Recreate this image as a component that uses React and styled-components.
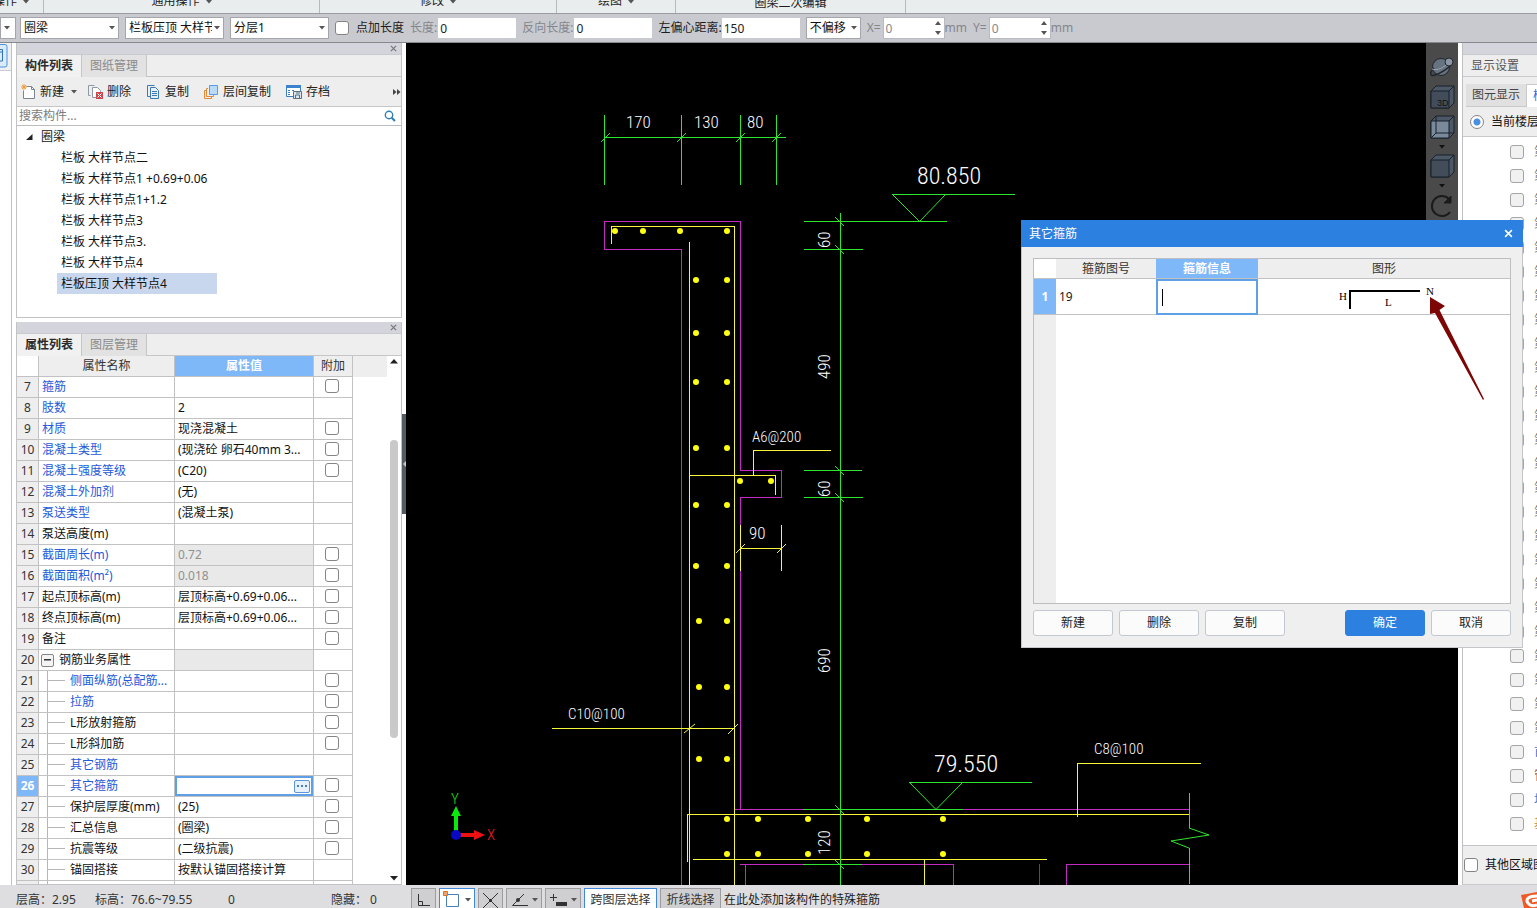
import React from "react";
import styled, { createGlobalStyle, css } from "styled-components";

const Global = createGlobalStyle`
  *, *::before, *::after { box-sizing: border-box; }
  body { margin: 0; background: #fff; }
  body, button, input, select, table {
    font-family: "Noto Sans", "Noto Sans CJK SC", sans-serif;
    font-size: 12px;
    line-height: 16px;
    color: #1c1c1c;
  }
`;

const Page = styled.div`
  display: flex;
  flex-direction: column;
  height: 100vh;
  overflow: hidden;
  white-space: nowrap;
`;

/* ---------- ribbon and option bar ---------- */

const Ribbon = styled.header`
  display: flex;
  flex: none;
  height: 14px;
  overflow: hidden;
  background: #e9edee;
  border-bottom: 1px solid #9b9ea1;
`;

const RibbonGroup = styled.div`
  display: flex;
  flex: none;
  align-items: flex-end;
  justify-content: ${(p) => (p.$end ? "flex-end" : "center")};
  gap: 6px;
  width: ${(p) => p.$width}px;
  padding: 0 ${(p) => (p.$end ? 14 : 0)}px ${(p) => (p.$low ? 2 : 4)}px 0;
  border-right: 1px solid #b5babd;
`;

const RibbonCaret = styled.span`
  display: flex;
  padding-bottom: 5px;
`;

const OptionBar = styled.div`
  display: flex;
  flex: none;
  align-items: center;
  gap: 6px;
  height: 29px;
  background: #c9cad0;
  border-bottom: 1px solid #86888d;
`;

const SelectBox = styled.span`
  position: relative;
  display: flex;
  flex: none;
  width: ${(p) => p.$width}px;
  svg { position: absolute; right: 4px; top: 9px; pointer-events: none; }
`;

const Select = styled.select`
  appearance: none;
  width: 100%;
  height: 22px;
  padding: 0 11px 0 3px;
  border: 1px solid #a5a6ab;
  border-radius: 0;
  background: #fff;
  color: #111;
`;

const Field = styled.label`
  display: flex;
  flex: none;
  align-items: center;
  gap: ${(p) => p.$gap || 0}px;
  color: ${(p) => (p.$dim ? "#84868b" : "#1c1c1c")};
`;

const Input = styled.input`
  width: ${(p) => p.$width}px;
  height: 20px;
  padding: 0 2px;
  border: 0;
  background: #fff;
  color: ${(p) => (p.$dim ? "#85878b" : "#222")};
  outline: none;
`;

const Spinner = styled.span`
  display: flex;
  align-items: center;
  justify-content: space-between;
  width: 62px;
  padding-right: 3px;
  background: #fff;
  border: 1px solid #b9bac0;
`;

const Check = styled.input`
  appearance: none;
  flex: none;
  width: 14px;
  height: 14px;
  margin: 0;
  border: 1px solid ${(p) => (p.$soft ? "#a4a4a4" : "#858585")};
  border-radius: 3px;
  background: ${(p) => (p.$soft ? "#f1f1f1" : "#fff")};
`;

/* ---------- docked panels ---------- */

const Work = styled.main`
  position: relative;
  display: flex;
  flex: 1;
  min-height: 0;
`;

const Rail = styled.aside`
  flex: none;
  width: 12px;
  overflow: hidden;
  border-right: 1px solid #bfc1c9;
  background: #fff;
`;

const RailTop = styled.div`
  height: 28px;
  background: #eff0f4;
  border-bottom: 1px solid #c9ccd6;
`;

const Dock = styled.aside`
  display: flex;
  flex: none;
  flex-direction: column;
  gap: 4px;
  width: 390px;
  padding-left: 4px;
`;

const Panel = styled.section`
  display: flex;
  flex-direction: column;
  flex: ${(p) => (p.$grow ? "1" : "0 0 275px")};
  min-height: 0;
  border: 1px solid #c3c3c6;
  border-top: 0;
`;

const PanelTitle = styled.div`
  display: flex;
  flex: none;
  align-items: center;
  justify-content: flex-end;
  height: 12px;
  padding-right: 4px;
  background: #d3d4dc;
  border-bottom: 1px solid #c9cad0;
`;

const IconButton = styled.button`
  display: flex;
  align-items: center;
  justify-content: center;
  padding: 0;
  border: 0;
  background: none;
`;

const Tabs = styled.div`
  display: flex;
  flex: none;
  height: 22px;
  background: #eee;
  border-bottom: 1px solid #c6c6c8;
`;

const Tab = styled.button`
  padding: 0 8px;
  height: 22px;
  border: 0;
  border-right: 1px solid #c6c6c8;
  background: ${(p) => (p.$active ? "#f1f1f1" : "#e2e2e2")};
  color: ${(p) => (p.$active ? "#2b2b2b" : "#8a8a8a")};
  font-weight: ${(p) => (p.$active ? 600 : 400)};
`;

const Tools = styled.div`
  display: flex;
  flex: none;
  align-items: center;
  gap: 15px;
  height: 30px;
  padding: 0 0 0 4px;
  background: #eee;
  border-bottom: 1px solid #c6c6c8;
`;

const Tool = styled.button`
  display: flex;
  align-items: center;
  gap: 3px;
  padding: 0;
  border: 0;
  background: none;
  color: #222;
`;

const CaretGap = styled.span`
  display: flex;
  margin-right: -4px;
  padding-left: 4px;
`;

const More = styled(IconButton)`
  margin-left: auto;
`;

const Search = styled.label`
  display: flex;
  flex: none;
  align-items: center;
  height: 19px;
  padding-right: 5px;
  border-bottom: 1px solid #bcbcbe;
  input {
    flex: 1;
    min-width: 0;
    padding: 0 2px;
    border: 0;
    outline: none;
  }
  input::placeholder { color: #7c7c7c; opacity: 1; }
`;

const Tree = styled.ul`
  margin: 0;
  padding: 0;
  list-style: none;
`;

const TreeRoot = styled.div`
  display: flex;
  align-items: center;
  gap: 8px;
  height: 21px;
  padding-left: 9px;
  color: #111;
`;

const TreeItem = styled.li`
  width: 160px;
  height: 21px;
  margin-left: 40px;
  padding-left: 4px;
  line-height: 21px;
  color: #111;
  background: ${(p) => (p.$selected ? "#c8d7ee" : "transparent")};
`;

/* ---------- property grid ---------- */

const GridArea = styled.div`
  display: flex;
  flex: 1;
  min-height: 0;
  overflow: hidden;
`;

const GridScroll = styled.div`
  flex: 1;
  overflow: hidden;
  background: linear-gradient(#eee 21px, #fff 21px);
`;

const Grid = styled.table`
  width: 336px;
  table-layout: fixed;
  border-collapse: separate;
  border-spacing: 0;
`;

const cell = css`
  height: 21px;
  padding: 0 3px;
  border-right: 1px solid #c2c2c2;
  border-bottom: 1px solid #c2c2c2;
  font-weight: 400;
  overflow: hidden;
`;

const Head = styled.th`
  ${cell}
  background: ${(p) => (p.$on ? "#7fb8f8" : p.$blank ? "#fff" : "#eee")};
  color: ${(p) => (p.$on ? "#fff" : "#333")};
  font-weight: ${(p) => (p.$on ? 600 : 400)};
`;

const Num = styled.th`
  ${cell}
  padding: 0;
  background: ${(p) => (p.$on ? "#7fb8f8" : "#eee")};
  color: ${(p) => (p.$on ? "#fff" : "#333")};
  font-weight: ${(p) => (p.$on ? 700 : 400)};
`;

const Name = styled.td`
  ${cell}
  color: ${(p) => (p.$link ? "#2559d8" : "#111")};
`;

const NameInner = styled.span`
  display: flex;
  align-items: center;
  gap: 5px;
  height: 20px;
`;

const Branch = styled.span`
  flex: none;
  align-self: stretch;
  width: 18px;
  margin-left: 5px;
  border-left: 1px solid #b6b6b6;
  background: linear-gradient(#b6b6b6, #b6b6b6) 0 9px / 18px 1px no-repeat;
`;

const Value = styled.td`
  ${cell}
  background: ${(p) => (p.$locked ? "#e9e9e9" : "#fff")};
  color: ${(p) => (p.$locked ? "#909090" : "#111")};
  ${(p) => p.$on && "box-shadow: inset 0 0 0 2px #5f9fe6;"}
`;

const ValueInner = styled.span`
  display: flex;
  align-items: center;
  justify-content: ${(p) => (p.$end ? "flex-end" : "flex-start")};
`;

const Flag = styled.td`
  ${cell}
  padding: 0 11px 2px;
  input { display: block; }
`;

const Ellipsis = styled(IconButton)`
  width: 16px;
  height: 13px;
  border: 1px solid #5b97d8;
  border-radius: 2px;
  background: #e6f1fc;
`;

const Toggle = styled(IconButton)`
  flex: none;
  width: 13px;
  height: 13px;
  margin-left: -1px;
  border: 1px solid #858585;
  border-radius: 2px;
  background: #f4f4f4;
`;

const ScrollBar = styled.div`
  display: flex;
  flex: none;
  flex-direction: column;
  align-items: center;
  width: 14px;
  padding: 3px 0;
  background: #fff;
`;

const Thumb = styled.div`
  flex: 0 0 298px;
  width: 8px;
  margin: 76px 0 auto;
  border-radius: 4px;
  background: #c9c9c9;
`;

/* ---------- drawing area ---------- */

const Splitter = styled.div`
  display: flex;
  flex: none;
  align-items: center;
  width: 4px;
  button {
    display: flex;
    align-items: center;
    width: 4px;
    height: 100px;
    padding: 0;
    border: 0;
    background: #555b65;
  }
`;

const Canvas = styled.section`
  position: relative;
  flex: 1;
  min-width: 0;
  overflow: hidden;
  background: #000;
  > svg { display: block; }
`;

const ViewTools = styled.nav`
  position: absolute;
  top: 0;
  right: 0;
  display: flex;
  flex-direction: column;
  align-items: center;
  gap: 5px;
  width: 32px;
  height: 190px;
  padding-top: 11px;
  background: #4a4a4b;
`;

const CadText = styled.text`
  font-family: "Roboto Condensed", "Liberation Sans Narrow", "DejaVu Sans Condensed", sans-serif;
  font-weight: 300;
  font-size: ${(p) => p.$size || 17}px;
  fill: ${(p) => p.$fill || "#fff"};
`;

/* ---------- display settings ---------- */

const Side = styled.aside`
  display: flex;
  flex: none;
  flex-direction: column;
  width: 79px;
  padding-left: 4px;
  overflow: hidden;
  background: #fff;
`;

const SideBody = styled.div`
  display: flex;
  flex: 1;
  flex-direction: column;
  min-height: 0;
  overflow: hidden;
  border-left: 1px solid #bfbfc3;
  border-bottom: 1px solid #c9c9cc;
`;

const SideTitle = styled.h2`
  flex: none;
  height: 22px;
  margin: 0;
  padding-left: 8px;
  background: #eee;
  border-bottom: 1px solid #c9c9cc;
  font-size: 12px;
  font-weight: 400;
  line-height: 22px;
  color: #555;
`;

const SideTabs = styled.div`
  display: flex;
  flex: none;
  height: 30px;
  padding: 7px 0 0 3px;
  background: #eee;
`;

const SideTab = styled.button`
  flex: none;
  padding: 0 6px;
  border: 1px solid #c9c9cc;
  border-width: ${(p) => (p.$active ? "1px 1px 0" : "0 0 1px")};
  background: ${(p) => (p.$active ? "#fff" : "#e0e0e0")};
  color: ${(p) => (p.$active ? "#2d6be0" : "#444")};
`;

const RadioRow = styled.label`
  display: flex;
  flex: none;
  align-items: center;
  gap: 7px;
  height: 30px;
  padding-left: 7px;
  background: #eee;
  border-bottom: 1px solid #c9c9cc;
  color: #111;
`;

const Radio = styled.input`
  appearance: none;
  flex: none;
  width: 14px;
  height: 14px;
  margin: 0;
  border: 1px solid #858585;
  border-radius: 50%;
  background: radial-gradient(#4a90e2 3px, #fff 4px);
`;

const Floors = styled.div`
  flex: 1;
  min-height: 0;
  padding-top: 3px;
  overflow: hidden;
`;

const Floor = styled.label`
  display: flex;
  align-items: center;
  gap: 10px;
  height: 24px;
  padding-left: 47px;
  color: ${(p) => p.$color || "#777"};
`;

const SideFoot = styled.label`
  display: flex;
  flex: none;
  align-items: center;
  gap: 7px;
  height: 39px;
  padding-left: 1px;
  background: #eee;
  border-top: 1px solid #c3c3c6;
  color: #111;
`;

/* ---------- stirrup dialog ---------- */

const Dialog = styled.section`
  position: absolute;
  top: 177px;
  right: 14px;
  display: flex;
  flex-direction: column;
  width: 502px;
  height: 428px;
  background: #efeff0;
  border: 1px solid #c4c5c9;
  border-top: 0;
`;

const DialogTitle = styled.header`
  display: flex;
  flex: none;
  align-items: center;
  justify-content: space-between;
  height: 27px;
  margin: 0 -1px;
  padding: 0 10px 0 8px;
  background: #2b80e0;
  color: #fff;
`;

const DialogBody = styled.div`
  display: flex;
  flex: 1;
  flex-direction: column;
  gap: 6px;
  padding: 11px 11px 11px;
`;

const Sheet = styled.div`
  flex: 1;
  border: 1px solid #bdbec1;
  background: linear-gradient(to right, #eee 22px, #fff 22px);
`;

const SheetTable = styled.table`
  width: 100%;
  table-layout: fixed;
  border-collapse: separate;
  border-spacing: 0;
`;

const SheetHead = styled(Head)`
  height: 20px;
  border-right: 0;
`;

const SheetCell = styled.td`
  height: 36px;
  padding: 0 3px;
  border-bottom: 1px solid #c2c2c2;
  background: #fff;
  ${(p) => p.$on && "padding: 0; border: 2px solid #5f9fe6;"}
  svg { display: block; }
`;

const SheetNum = styled(Num)`
  height: 36px;
  border-right: 0;
`;

const CellInput = styled.div`
  display: flex;
  align-items: center;
  padding-left: 4px;
  &::before {
    content: "";
    width: 1px;
    height: 17px;
    background: #000;
  }
  input {
    width: 80px;
    padding: 0;
    border: 0;
    outline: none;
  }
`;

const Buttons = styled.div`
  display: flex;
  flex: none;
  gap: 6px;
`;

const Button = styled.button`
  width: 80px;
  height: 26px;
  border: 1px solid ${(p) => (p.$primary ? "#2b80e0" : "#c3c7cf")};
  border-radius: 3px;
  background: ${(p) => (p.$primary ? "#2b80e0" : "#fbfbfb")};
  color: ${(p) => (p.$primary ? "#fff" : "#222")};
  margin-left: ${(p) => (p.$primary ? "auto" : "0")};
`;

const Pointer = styled.svg`
  position: absolute;
  top: 75px;
  right: 36px;
  pointer-events: none;
`;

/* ---------- status bar ---------- */

const Status = styled.footer`
  display: flex;
  flex: none;
  height: 23px;
  padding-top: 3px;
  overflow: hidden;
  background: #dedee1;
`;

const Readouts = styled.div`
  display: flex;
  flex: none;
  width: 411px;
  padding-left: 16px;
  line-height: 24px;
  color: #333;
`;

const Readout = styled.span`
  width: ${(p) => p.$width}px;
`;

const StatusTools = styled.div`
  display: flex;
  flex: 1;
  gap: 3px;
  line-height: 24px;
`;

const StatusButton = styled.button`
  display: flex;
  flex: none;
  align-items: center;
  justify-content: center;
  gap: 4px;
  width: ${(p) => p.$width}px;
  height: 24px;
  padding: 0;
  border: 1px solid ${(p) => (p.$on ? "#3f88dc" : "#9c9ca0")};
  background: ${(p) => (p.$on ? "#fff" : "#cfcfd2")};
  color: #333;
`;

const Corner = styled.svg`
  flex: none;
  margin-left: auto;
`;

/* ---------- icons ---------- */

const Caret = () => (
  <svg width="6" height="4" viewBox="0 0 6 4"><path d="M0 0h6L3 3.5z" fill="#555" /></svg>
);
const Cross = ({ color = "#777", size = 7, weight = 1.4 }) => (
  <svg width={size} height={size} viewBox="0 0 8 8">
    <path d="M1 1l6 6M7 1L1 7" stroke={color} strokeWidth={weight} />
  </svg>
);
const Steps = () => (
  <svg width="6" height="14" viewBox="0 0 6 14">
    <path d="M0 4l3-4 3 4zM0 10h6l-3 4z" fill="#555" />
  </svg>
);
const NewIcon = () => (
  <svg width="16" height="16" viewBox="0 0 16 16" fill="none">
    <path d="M5.5 2.5h5l3 3v9h-11v-8" fill="#fff" stroke="#7b8694" />
    <path d="M10.500 2.500v3h3" stroke="#7b8694" />
    <path d="M3 0v6M0 3h6M1 1l4 4M5 1L1 5" stroke="#ee9a32" />
  </svg>
);
const DeleteIcon = () => (
  <svg width="16" height="16" viewBox="0 0 16 16" fill="none">
    <path d="M2.500 11.500h-2v-10h6" stroke="#8f98a3" />
    <path d="M4.500 3.500h5l3 3v7h-8z" fill="#fff" stroke="#8f98a3" />
    <path d="M8 8h7v7H8z" fill="#c9484d" />
    <path d="M9.500 9.500l4 4M13.500 9.500l-4 4" stroke="#fff" />
  </svg>
);
const CopyIcon = () => (
  <svg width="16" height="16" viewBox="-1 0 16 16" fill="none">
    <path d="M3.500 12.500h-3v-11h7" stroke="#3e78b5" />
    <path d="M3.500 3.500h5l3 3v8h-8z" fill="#e6f1fb" stroke="#3e78b5" />
    <path d="M5 7.500h5M5 9.500h5M5 11.500h5" stroke="#3e78b5" />
  </svg>
);
const LayerIcon = () => (
  <svg width="16" height="16" viewBox="0 0 16 16" fill="none">
    <path d="M2 6.500H.5v8h7V13" stroke="#e08b3c" />
    <path d="M4 4.500H2.500v8h7V11" stroke="#e08b3c" />
    <path d="M5.500 1.500h8v9h-8z" fill="#b9daf9" stroke="#5d9be0" />
  </svg>
);
const SaveIcon = () => (
  <svg width="17" height="16" viewBox="0 0 17 16" fill="none">
    <path d="M.5 1.500h14v11H.5z" fill="#fff" stroke="#3b7cc0" />
    <path d="M0 1h15v3H0z" fill="#3b82cf" />
    <path d="M2 6.500h2M2 8.500h2M2 10.500h2M6 6.500h2" stroke="#3b7cc0" />
    <path d="M7.500 7.500h8v7h-8z" fill="#dbe6f1" stroke="#5f7180" />
    <path d="M9.500 14v-3h4v3M10 9h4" stroke="#5f7180" />
  </svg>
);
const SearchIcon = () => (
  <svg width="12" height="12" viewBox="0 0 12 12" fill="none" stroke="#2f7fb5">
    <circle cx="5" cy="5" r="3.700" strokeWidth="1.400" /><path d="M7.700 7.700L11 11" strokeWidth="2" />
  </svg>
);
const Cube = ({ label, front = "#434d5a", wire }) => (
  <svg width="25" height="25" viewBox="0 0 25 25" stroke="#17202b">
    <path d="M1 6l5-5h18v17l-5 5H1z" fill="#4d5866" />
    <path d="M1 6h18v17H1z" fill={front} />
    <path d="M19 6l5-5" />
    {wire && <path d="M6 1v17h18M6 18l-5 5" fill="none" />}
    {label && (
      <text x="7" y="21" fontFamily="Liberation Sans" fontSize="9" fill="#111" stroke="none">{label}</text>
    )}
  </svg>
);
const Orbit = () => (
  <svg width="26" height="26" viewBox="0 0 26 26" stroke="#20262e" fill="none">
    <circle cx="12" cy="13" r="8.500" fill="#687382" />
    <path d="M5 14c-5 5-4 9 1 7c6-2 12-6 16-10" strokeWidth="1.500" />
    <path d="M3 15c5 2 12-1 17-7" stroke="#9aa4b1" />
    <circle cx="20" cy="8" r="4" fill="#8b95a3" />
  </svg>
);
const Rotate = () => (
  <svg width="26" height="26" viewBox="0 0 26 26" fill="none" stroke="#1b1b1b" strokeWidth="2">
    <path d="M20 6a10 10 0 1 0 1 13" /><path d="M22 3v7h-7z" fill="#1b1b1b" strokeWidth="1" />
  </svg>
);
const DarkCaret = () => (
  <svg width="6" height="4" viewBox="0 0 6 4"><path d="M0 0h6L3 3.500z" fill="#111" /></svg>
);

/* ---------- section drawing ---------- */

const GREEN = "#2ee62e";
const YELLOW = "#f5f53a";
const MAGENTA = "#c42ac4";

const dots = [
  [615, 231], [643, 231], [680, 231], [727, 231],
  [696, 280], [727, 280], [696, 333], [727, 333], [696, 382], [727, 382],
  [696, 448], [727, 448], [740, 481], [771, 481], [696, 505], [727, 505],
  [696, 566], [727, 566], [699, 621], [727, 621], [699, 687], [727, 687],
  [699, 759], [727, 759],
  ...[727, 758, 808, 867, 943].flatMap((x) => [[x, 819], [x, 854]]),
];

const labels = [[626, 128, "170"], [694, 128, "130"], [747, 128, "80"], [749, 539, "90"]];
const leaders = [[752, 442, "A6@200"], [568, 719, "C10@100"], [1094, 754, "C8@100"]];
const sideLabels = [[248, "60"], [379, "490"], [497, "60"], [673, "690"], [855, "120"]];

const SectionDrawing = () => (
  <svg width="100%" height="100%" role="img" aria-label="栏板大样">
    <g transform="translate(-406 -43)" fill="none" strokeWidth="1">
      <g stroke={MAGENTA} shapeRendering="crispEdges">
        <path d="M735 809.500H740.500V497.500H781.500V470.500H740.500V221.500H604.500V249.500H681.500V885" />
        <path d="M740 809.500H1189M740 864.500H953.500V885M745.500 864V885M1066.500 885V864.500H1189" />
      </g>
      <g stroke={YELLOW} shapeRendering="crispEdges">
        <path d="M611.500 244V226.500H734.500V885M689.500 242V885" />
        <path d="M689 475.500H775.500V495M753.500 475V450.500H831" />
        <path d="M740.500 525V571M781.500 525V571M740 548.500H782M552 728.500H735" />
        <path d="M687.500 862V814.500H1189M693 859.500H1047M924.500 859V885M1077.500 817V763.500H1201" />
      </g>
      <path d="M736 553l9-9M777 553l9-9M684 733l11-9M728 734l10-10" stroke={YELLOW} />
      <path d="M1039.500 864V885" stroke="#c81e1e" shapeRendering="crispEdges" />
      <g stroke={GREEN} shapeRendering="crispEdges">
        <path d="M604.500 115V185M681.500 115V185M740.500 115V185M776.500 115V185M604 137.500H786" />
        <path d="M840.500 213V885M804 221.500H947M804 249.500H863M804 470.500H862M804 497.500H863" />
        <path d="M803 809.500H963M803 864.500H862M892 194.500H1015M909 782.500H1032" />
        <path d="M1189.500 793V828M1189.500 848V884" />
      </g>
      <g stroke={GREEN}>
        <path d="M601 142l9-9M677 142l9-9M736 142l9-9M772 142l9-9" />
        <path d="M835 217l9 9M835 245l9 9M835 466l9 9M835 493l9 9M835 805l9 9M835 860l9 9" />
        <path d="M892 194l27.500 27.500L946 194M909 782l27 27.500L963 782" />
        <path d="M1189 828l20 7l-38 6l18 7" />
      </g>
      <g fill="#ffff12">
        {dots.map(([x, y]) => <circle key={`${x}-${y}`} cx={x} cy={y} r="3" />)}
      </g>
      {labels.map(([x, y, t]) => <CadText key={t} x={x} y={y}>{t}</CadText>)}
      {leaders.map(([x, y, t]) => <CadText key={t} x={x} y={y} $size={15}>{t}</CadText>)}
      {sideLabels.map(([y, t]) => (
        <CadText key={y} transform={`translate(830 ${y}) rotate(-90)`}>{t}</CadText>
      ))}
      <CadText x="917" y="184" $size={24}>80.850</CadText>
      <CadText x="934" y="772" $size={24}>79.550</CadText>
      <path d="M454 832V816H451L456 806L461 816H458V832z" fill="#0be80b" />
      <path d="M460 833H474V830L485 835L474 840V837H460z" fill="#ee1111" />
      <circle cx="456" cy="835" r="5" fill="#0909c4" />
      <CadText x="451" y="804" $size={15} $fill="#16e616">Y</CadText>
      <CadText x="487" y="840" $size={15} $fill="#f62020">X</CadText>
    </g>
  </svg>
);

/* ---------- data ---------- */

const components = [
  "栏板 大样节点二", "栏板 大样节点1 +0.69+0.06", "栏板 大样节点1+1.2", "栏板 大样节点3",
  "栏板 大样节点3.", "栏板 大样节点4", "栏板压顶 大样节点4",
];

const props = [
  { n: 7, name: "箍筋", link: true, check: true },
  { n: 8, name: "肢数", value: "2", link: true },
  { n: 9, name: "材质", value: "现浇混凝土", link: true, check: true },
  { n: 10, name: "混凝土类型", value: "(现浇砼 卵石40mm 3...", link: true, check: true },
  { n: 11, name: "混凝土强度等级", value: "(C20)", link: true, check: true },
  { n: 12, name: "混凝土外加剂", value: "(无)", link: true },
  { n: 13, name: "泵送类型", value: "(混凝土泵)", link: true },
  { n: 14, name: "泵送高度(m)" },
  { n: 15, name: "截面周长(m)", value: "0.72", link: true, check: true, locked: true },
  { n: 16, name: "截面面积(m²)", value: "0.018", link: true, check: true, locked: true },
  { n: 17, name: "起点顶标高(m)", value: "层顶标高+0.69+0.06...", check: true },
  { n: 18, name: "终点顶标高(m)", value: "层顶标高+0.69+0.06...", check: true },
  { n: 19, name: "备注", check: true },
  { n: 20, name: "钢筋业务属性", group: true, locked: true },
  { n: 21, name: "侧面纵筋(总配筋...", link: true, child: true, check: true },
  { n: 22, name: "拉筋", link: true, child: true, check: true },
  { n: 23, name: "L形放射箍筋", child: true, check: true },
  { n: 24, name: "L形斜加筋", child: true, check: true },
  { n: 25, name: "其它钢筋", link: true, child: true },
  { n: 26, name: "其它箍筋", link: true, child: true, check: true, on: true },
  { n: 27, name: "保护层厚度(mm)", value: "(25)", child: true, check: true },
  { n: 28, name: "汇总信息", value: "(圈梁)", child: true, check: true },
  { n: 29, name: "抗震等级", value: "(二级抗震)", child: true, check: true },
  { n: 30, name: "锚固搭接", value: "按默认锚固搭接计算", child: true },
  { n: "", name: "", child: true },
];

const floors = [
  ...Array.from({ length: 25 }, (_, i) => ({ name: `第${26 - i}层` })),
  { name: "首层", color: "#3f6fc0" },
  { name: "管层", color: "#a85c5c" },
  { name: "地下层", color: "#3f7fc8" },
  { name: "基础层", color: "#c08a3c" },
];

const RibbonMenu = ({ width, end, children }) => (
  <RibbonGroup $width={width} $end={end}>
    {children}
    <RibbonCaret><Caret /></RibbonCaret>
  </RibbonGroup>
);

const Combo = ({ label, width, value }) => (
  <SelectBox $width={width}>
    <Select aria-label={label} defaultValue={value}><option>{value}</option></Select>
    <Caret />
  </SelectBox>
);

const Offset = ({ axis }) => (
  <Field $dim>
    <Field as="span" $dim $gap={2}>
      {axis}=
      <Spinner><Input $width={48} $dim defaultValue="0" /><Steps /></Spinner>
    </Field>
    mm
  </Field>
);

export default function App() {
  return (
    <Page>
      <Global />
      <Ribbon>
        <RibbonMenu width={44} end>操作</RibbonMenu>
        <RibbonMenu width={276}>通用操作</RibbonMenu>
        <RibbonMenu width={237}>修改</RibbonMenu>
        <RibbonMenu width={119}>绘图</RibbonMenu>
        <RibbonGroup $width={230} $low>圈梁二次编辑</RibbonGroup>
      </Ribbon>

      <OptionBar>
        <Combo label="楼层" width={14} value="" />
        <Combo label="构件类型" width={99} value="圈梁" />
        <Combo label="构件" width={99} value="栏板压顶 大样节点4" />
        <Combo label="分层" width={99} value="分层1" />
        <Field $gap={7}><Check type="checkbox" />点加长度</Field>
        <Field $dim $gap={1}>长度:<Input $width={78} defaultValue="0" /></Field>
        <Field $dim $gap={1}>反向长度:<Input $width={78} defaultValue="0" /></Field>
        <Field>左偏心距离:<Input $width={78} defaultValue="150" /></Field>
        <Combo label="偏移" width={55} value="不偏移" />
        <Offset axis="X" />
        <Offset axis="Y" />
      </OptionBar>

      <Work>
        <Rail>
          <RailTop>
            <svg width="9" height="26" viewBox="0 0 9 26" fill="none">
              <path d="M-4 1.500H5a2 2 0 0 1 2 2V22a2 2 0 0 1-2 2h-9z" fill="#dcebfb" stroke="#4b92dd" />
              <path d="M-3 6.500H2.500V18H-3M-3 9h5" stroke="#2d73bd" />
            </svg>
          </RailTop>
        </Rail>
        <Dock>
          <Panel>
            <PanelTitle><IconButton aria-label="关闭"><Cross /></IconButton></PanelTitle>
            <Tabs><Tab $active>构件列表</Tab><Tab>图纸管理</Tab></Tabs>
            <Tools>
              <Tool><NewIcon />新建<CaretGap><Caret /></CaretGap></Tool>
              <Tool><DeleteIcon />删除</Tool>
              <Tool><CopyIcon />复制</Tool>
              <Tool><LayerIcon />层间复制</Tool>
              <Tool><SaveIcon />存档</Tool>
              <More aria-label="更多">
                <svg width="8" height="6" viewBox="0 0 8 6"><path d="M0 0l3.500 3L0 6zM4 0l3.500 3L4 6z" fill="#444" /></svg>
              </More>
            </Tools>
            <Search><input aria-label="搜索构件" placeholder="搜索构件..." /><SearchIcon /></Search>
            <Tree>
              <li>
                <TreeRoot>
                  <svg width="7" height="6" viewBox="0 0 7 6"><path d="M6.500 0v6H0z" fill="#222" /></svg>
                  圈梁
                </TreeRoot>
                <Tree>
                  {components.map((c, i) => <TreeItem key={c} $selected={i === 6}>{c}</TreeItem>)}
                </Tree>
              </li>
            </Tree>
          </Panel>

          <Panel $grow>
            <PanelTitle><IconButton aria-label="关闭"><Cross /></IconButton></PanelTitle>
            <Tabs><Tab $active>属性列表</Tab><Tab>图层管理</Tab></Tabs>
            <GridArea>
              <GridScroll>
                <Grid>
                  <colgroup><col width="22" /><col width="136" /><col width="139" /><col width="39" /></colgroup>
                  <thead>
                    <tr><Head $blank /><Head>属性名称</Head><Head $on>属性值</Head><Head>附加</Head></tr>
                  </thead>
                  <tbody>
                    {props.map((p) => (
                      <tr key={p.n}>
                        <Num $on={p.on}>{p.n}</Num>
                        <Name $link={p.link}>
                          <NameInner>
                            {p.child && <Branch />}
                            {p.group && (
                              <Toggle aria-label="折叠">
                                <svg width="7" height="2" viewBox="0 0 7 2"><path d="M0 0h7v1.500H0z" fill="#333" /></svg>
                              </Toggle>
                            )}
                            {p.name}
                          </NameInner>
                        </Name>
                        <Value $locked={p.locked} $on={p.on}>
                          <ValueInner $end={p.on}>
                            {p.on ? (
                              <Ellipsis aria-label="编辑其它箍筋">
                                <svg width="10" height="2" viewBox="0 0 10 2"><path d="M0 0h2v2H0zM4 0h2v2H4zM8 0h2v2H8z" fill="#4a7fb8" /></svg>
                              </Ellipsis>
                            ) : p.value}
                          </ValueInner>
                        </Value>
                        <Flag>{p.check && <Check type="checkbox" aria-label={`附加 ${p.name}`} />}</Flag>
                      </tr>
                    ))}
                  </tbody>
                </Grid>
              </GridScroll>
              <ScrollBar>
                <svg width="8" height="5" viewBox="0 0 8 5"><path d="M0 4.500h8L4 0z" fill="#222" /></svg>
                <Thumb />
                <svg width="8" height="5" viewBox="0 0 8 5"><path d="M0 0h8L4 4.500z" fill="#222" /></svg>
              </ScrollBar>
            </GridArea>
          </Panel>
        </Dock>
        <Splitter>
          <button aria-label="收起面板">
            <svg width="4" height="6" viewBox="0 0 4 6"><path d="M4 0v6L1 3z" fill="#c5c9d0" /></svg>
          </button>
        </Splitter>

        <Canvas>
          <SectionDrawing />
          <ViewTools>
            <IconButton aria-label="动态观察"><Orbit /></IconButton>
            <IconButton aria-label="三维"><Cube label="3D" /></IconButton>
            <IconButton aria-label="线框"><Cube front="#7b8a9a" wire /></IconButton>
            <DarkCaret />
            <IconButton aria-label="实体"><Cube /></IconButton>
            <DarkCaret />
            <IconButton aria-label="旋转"><Rotate /></IconButton>
          </ViewTools>
        </Canvas>

        <Side>
          <SideBody>
            <PanelTitle />
            <SideTitle>显示设置</SideTitle>
            <SideTabs><SideTab>图元显示</SideTab><SideTab $active>楼层显示</SideTab></SideTabs>
            <RadioRow><Radio type="radio" name="floor" defaultChecked />当前楼层</RadioRow>
            <Floors>
              {floors.map((f) => (
                <Floor key={f.name} $color={f.color}><Check type="checkbox" $soft />{f.name}</Floor>
              ))}
            </Floors>
            <SideFoot><Check type="checkbox" />其他区域图元</SideFoot>
          </SideBody>
        </Side>

        <Dialog role="dialog" aria-label="其它箍筋">
          <DialogTitle>
            其它箍筋
            <IconButton aria-label="关闭"><Cross color="#fff" size={9} /></IconButton>
          </DialogTitle>
          <DialogBody>
            <Sheet>
              <SheetTable>
                <colgroup><col width="22" /><col width="100" /><col width="102" /><col /></colgroup>
                <thead>
                  <tr><SheetHead $blank /><SheetHead>箍筋图号</SheetHead><SheetHead $on>箍筋信息</SheetHead><SheetHead>图形</SheetHead></tr>
                </thead>
                <tbody>
                  <tr>
                    <SheetNum $on>1</SheetNum>
                    <SheetCell>19</SheetCell>
                    <SheetCell $on><CellInput><input aria-label="箍筋信息" /></CellInput></SheetCell>
                    <SheetCell>
                      <svg width="100%" height="34" role="img" aria-label="箍筋图形">
                        <path d="M89 29V11H159" fill="none" stroke="#000" strokeWidth="2" />
                        <g fontFamily="Liberation Serif" fontSize="11" fill="#000">
                          <text x="78" y="20">H</text><text x="124" y="26">L</text><text x="165" y="15">N</text>
                        </g>
                      </svg>
                    </SheetCell>
                  </tr>
                </tbody>
              </SheetTable>
            </Sheet>
            <Buttons>
              <Button>新建</Button><Button>删除</Button><Button>复制</Button>
              <Button $primary>确定</Button><Button>取消</Button>
            </Buttons>
          </DialogBody>
          <Pointer width="60" height="108" viewBox="0 0 60 108">
            <path d="M4 2L19 11L13.500 15L58 104L57 105L9 18L4 19z" fill="#7d0505" />
          </Pointer>
        </Dialog>
      </Work>

      <Status>
        <Readouts>
          <Readout $width={79}>层高：2.95</Readout>
          <Readout $width={133}>标高：76.6~79.55</Readout>
          <Readout $width={103}>0</Readout>
          <Readout>隐藏： 0</Readout>
        </Readouts>
        <StatusTools>
          <StatusButton $width={25} aria-label="正交">
            <svg width="14" height="14" viewBox="0 0 14 14" fill="none" stroke="#333"><path d="M1.500 1v11.500H13M1.500 8.500h4v4" /></svg>
          </StatusButton>
          <StatusButton $width={36} $on aria-label="对象捕捉">
            <svg width="18" height="18" viewBox="0 0 18 18" fill="none">
              <path d="M3.500 3.500h12v12h-12z" stroke="#4a80b8" /><path d="M.5.500h4v4h-4z" fill="#f5a46a" stroke="#dc6f2a" />
            </svg>
            <Caret />
          </StatusButton>
          <StatusButton $width={25} aria-label="交点">
            <svg width="17" height="17" viewBox="0 0 17 17" fill="none" stroke="#333"><path d="M1 1l15 15M16 1L1 16" /><path d="M7 7h3v3H7z" fill="#333" stroke="none" /></svg>
          </StatusButton>
          <StatusButton $width={36} aria-label="角度">
            <svg width="17" height="15" viewBox="0 0 17 15" fill="none" stroke="#333"><path d="M13 1L1.500 12.500H17" /><circle cx="7" cy="7" r="2" fill="#333" stroke="none" /></svg>
            <Caret />
          </StatusButton>
          <StatusButton $width={36} aria-label="动态输入">
            <svg width="17" height="15" viewBox="0 0 17 15" fill="none" stroke="#333"><path d="M3.500 1v7M0 4.500h7" /><path d="M6 9h11v4H6z" fill="#333" stroke="none" /></svg>
            <Caret />
          </StatusButton>
          <StatusButton $width={73} $on>跨图层选择</StatusButton>
          <StatusButton $width={61}>折线选择</StatusButton>
          <span>在此处添加该构件的特殊箍筋</span>
          <Corner width="17" height="20" viewBox="0 0 17 20">
            <path d="M1 7L17 4V20H4z" fill="#ee5a26" />
            <path d="M17 8C9 8 5 11 8 15C10 18 14 18 17 17M17 12l-5 1" fill="none" stroke="#fff" strokeWidth="3" />
          </Corner>
        </StatusTools>
      </Status>
    </Page>
  );
}
